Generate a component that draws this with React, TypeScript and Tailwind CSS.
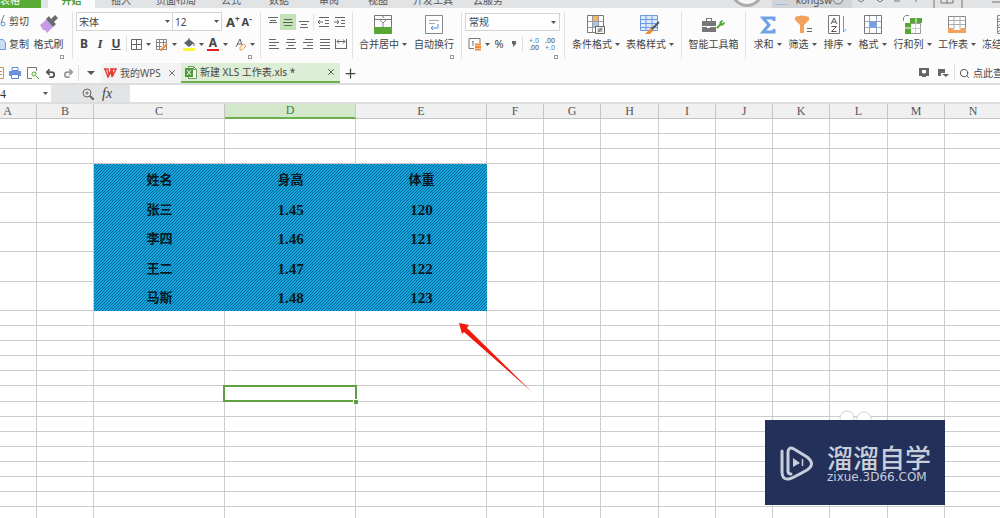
import React from 'react';
import { Plus, Search, Undo2, Redo2, X, Wrench } from 'lucide-react';

const menuTabs = [
  { name: '插入', left: 'ml-[16px] w-[20px]' },
  { name: '页面布局', left: 'ml-[25px] w-[40px]' },
  { name: '公式', left: 'ml-[25px] w-[20px]' },
  { name: '数据', left: 'ml-[28px] w-[20px]' },
  { name: '审阅', left: 'ml-[30px] w-[20px]' },
  { name: '视图', left: 'ml-[29px] w-[20px]' },
  { name: '开发工具', left: 'ml-[25px] w-[40px]' },
  { name: '云服务', left: 'ml-[20px] w-[30px]' },
];

const columns = [
  { name: 'A', width: 37 },
  { name: 'B', width: 57 },
  { name: 'C', width: 131 },
  { name: 'D', width: 131 },
  { name: 'E', width: 131 },
  { name: 'F', width: 57 },
  { name: 'G', width: 57 },
  { name: 'H', width: 58 },
  { name: 'I', width: 57 },
  { name: 'J', width: 57 },
  { name: 'K', width: 57 },
  { name: 'L', width: 58 },
  { name: 'M', width: 57 },
  { name: 'N', width: 57 },
];

const people = [
  ['姓名', '身高', '体重'],
  ['张三', '1.45', '120'],
  ['李四', '1.46', '121'],
  ['王二', '1.47', '122'],
  ['马斯', '1.48', '123'],
];

// first row of the filled block, and the row of the selected cell
const DATA_START = 3;
const SELECTED_ROW = 13;
const rows = Array.from({ length: 22 }, (_, i) => i);

const rowHeight = (row: number) => {
  if (row >= DATA_START && row < DATA_START + people.length) return row % 2 ? 'h-[29px]' : 'h-[30px]';
  return row === SELECTED_ROW ? 'h-[16px]' : 'h-[15px]';
};

const Caret: React.FC = () => (
  <svg width="5" height="3" viewBox="0 0 5 3" className="shrink-0">
    <path d="M0 0h5L2.5 3z" fill="#555" />
  </svg>
);

const Launcher: React.FC = () => (
  <button aria-label="更多设置" className="h-[4px] w-[4px] shrink-0 border border-[#999]" />
);

const Divider: React.FC = () => <div className="h-[47px] w-px shrink-0 bg-[#e2e2e2]" />;

const SmallDivider: React.FC = () => <div className="h-[16px] w-px shrink-0 bg-[#dedede]" />;

const lineSets: Record<string, number[][]> = {
  top: [[1, 10], [4, 6], [6, 8]],
  middle: [[3, 8], [6, 10], [9, 8]],
  bottom: [[5, 10], [8, 6], [11, 8]],
  left: [[1, 7], [4, 10], [7, 7], [10, 10]],
  center: [[1, 8], [4, 10], [7, 6], [10, 10]],
  right: [[1, 8], [4, 10], [7, 6], [10, 10]],
  justify: [[1, 10], [4, 10], [7, 10], [10, 10]],
};

const Lines: React.FC<{ kind: string }> = ({ kind }) => (
  <svg width="12" height="12" viewBox="0 0 12 12">
    {lineSets[kind].map(([y, w]) => {
      const x = kind === 'left' ? 1 : kind === 'right' ? 11 - w : 6 - w / 2;
      return <rect key={y} x={x} y={y} width={w} height="1" fill="#666" />;
    })}
  </svg>
);

const Indent: React.FC<{ flip?: boolean }> = ({ flip }) => (
  <svg width="12" height="12" viewBox="0 0 12 12" fill="none" stroke="#666">
    <path d="M1 1.500h10M7 4.500h4M7 7.500h4M1 10.500h10" />
    <path d={flip ? 'M0 6h5M3 4l2 2-2 2' : 'M5 6H0M2 4L0 6l2 2'} />
  </svg>
);

const BigButton: React.FC<{ label: string; width: string; caret?: boolean; children: React.ReactNode }> = ({
  label,
  width,
  caret,
  children,
}) => (
  <button className={`flex shrink-0 flex-col items-center ${width}`}>
    <span className="flex h-[25px] items-center justify-center">{children}</span>
    <span className="flex h-[14px] items-center gap-[3px] whitespace-nowrap">
      {label}
      {caret && <Caret />}
    </span>
  </button>
);

const SheetIcon: React.FC = () => (
  <svg width="12" height="13" viewBox="0 0 12 13" fill="none" className="shrink-0">
    <path d="M3.500 .5h5l3 3v9h-8z" fill="#fff" stroke="#6b9e58" />
    <path d="M8.500 .5v3h3" stroke="#6b9e58" />
    <rect y="2" width="8" height="9" fill="#4f9a38" />
    <path d="M2 4l4 5M6 4L2 9" stroke="#fff" />
  </svg>
);

const MenuBar: React.FC = () => (
  <nav className="flex h-[8px] shrink-0 items-end overflow-hidden bg-[#e2e3e5] text-[10px] leading-[12px] text-[#555]">
    <button className="flex h-[8px] w-[41px] shrink-0 items-end bg-[#5aaa36] text-white">
      <span className="pb-[2px]">表格</span>
    </button>
    <button className="ml-[7px] flex h-[8px] w-[47px] shrink-0 items-end justify-center bg-[#fcfcfc] font-bold text-[#4a9a35]">
      <span className="pb-[2px]">开始</span>
    </button>
    {menuTabs.map((tab) => (
      <button key={tab.name} className={`flex h-[8px] shrink-0 items-end whitespace-nowrap ${tab.left}`}>
        <span className="pb-[2px]">{tab.name}</span>
      </button>
    ))}
    <svg width="34" height="8" viewBox="0 0 34 8" className="ml-[227px] shrink-0">
      <circle cx="17" cy="-9" r="16" fill="#aaa" />
      <circle cx="17" cy="-9" r="13" fill="#f4f4f4" />
    </svg>
    <div className="ml-[8px] flex h-[8px] w-[80px] shrink-0 items-end justify-between bg-[#d3d4d7]">
      <svg width="16" height="8" viewBox="0 0 16 8">
        <path d="M3 4.500h13" stroke="#9fc0dc" />
      </svg>
      <span className="flex items-end pr-[8px]">
        <span className="pb-[2px]">kongsw</span>
        <svg width="12" height="8" viewBox="0 0 12 8" fill="none" stroke="#777">
          <circle cx="6" cy="-1" r="5" />
        </svg>
      </span>
    </div>
    <svg width="148" height="8" viewBox="0 0 148 8" className="shrink-0" fill="none" stroke="#777">
      <path d="M6 0l3 2 3-2M25 0l3 2 3-2M42 1h6M64 0v2M82 0v8M89 0v3h12V0M95 0v3M110 0v8M140 2h8" />
    </svg>
  </nav>
);

const ClipboardGroup: React.FC = () => (
  <>
    <div className="flex w-[29px] shrink-0 flex-col gap-[9px] pt-[2px]">
      <button className="flex items-center gap-[3px] whitespace-nowrap">
        <svg width="6" height="12" viewBox="0 0 6 12" fill="none" className="shrink-0">
          <path d="M4 0L1 8" stroke="#777" />
          <circle cx="3" cy="9" r="2" stroke="#5b94dc" />
        </svg>
        剪切
      </button>
      <button className="flex items-center gap-[3px] whitespace-nowrap">
        <svg width="6" height="12" viewBox="0 0 6 12" className="shrink-0">
          <path d="M-1 1.500h4l2.500 3v7H-1z" fill="#c9ddf5" stroke="#6a9ce0" />
        </svg>
        复制
      </button>
    </div>
    <div className="flex w-[43px] shrink-0 flex-col">
      <BigButton label="格式刷" width="w-[39px]">
        <svg width="20" height="20" viewBox="0 0 20 20">
          <path d="M1 10L8 4l6 8-6 6-2-3-2 0z" fill="#c69be8" />
          <path d="M7 4l3-3 2 3 4-4 3 3-4 4 2 2-3 3z" fill="#6b6b6b" />
        </svg>
      </BigButton>
      <div className="mt-[4px] flex justify-end pr-[8px]"><Launcher /></div>
    </div>
    <Divider />
  </>
);

const FontGroup: React.FC = () => (
  <>
    <div className="flex w-[187px] shrink-0 flex-col px-[3px]">
      <div className="flex h-[19px] items-center">
        <div className="flex h-[19px] w-[97px] items-center border border-[#d4d4d4] bg-white px-[2px]">
          <select aria-label="字体" className="min-w-0 flex-1 appearance-none"><option>宋体</option></select>
          <Caret />
        </div>
        <div className="flex h-[19px] w-[49px] items-center border border-l-0 border-[#d4d4d4] bg-white px-[2px]">
          <select aria-label="字号" className="min-w-0 flex-1 appearance-none"><option>12</option></select>
          <Caret />
        </div>
        <button className="ml-[4px] flex text-[13px] font-bold">
          A<span className="text-[8px] leading-[8px]">+</span>
        </button>
        <button className="ml-[2px] flex text-[11px] font-bold">
          A<span className="text-[8px] leading-[8px]">-</span>
        </button>
      </div>
      <div className="mt-[6px] flex h-[14px] items-center">
        <button className="w-[16px] text-[12px] font-bold">B</button>
        <button className="w-[16px] font-['Liberation_Serif',serif] text-[13px] font-bold italic">I</button>
        <button className="w-[16px] text-[12px] font-bold underline">U</button>
        <span className="ml-[2px] mr-[4px]"><SmallDivider /></span>
        <button aria-label="边框" className="flex w-[24px] items-center gap-[4px]">
          <svg width="11" height="11" viewBox="0 0 11 11" fill="none" stroke="#666">
            <path d="M.5 .5h10v10h-10zM5.500 .5v10M.5 5.500h10" />
          </svg>
          <Caret />
        </button>
        <button aria-label="绘制边框" className="flex w-[28px] items-center gap-[4px]">
          <svg width="13" height="13" viewBox="0 0 13 13" fill="none" stroke="#888">
            <path d="M1.500 1.500h10v10h-10zM4.500 1.500v10M8.500 1.500v6M1.500 4.500h10M1.500 8.500h5" />
            <path d="M12 6L7 11l-1 2" stroke="#ef8a3c" strokeWidth="2" />
          </svg>
          <Caret />
        </button>
        <button aria-label="填充颜色" className="flex w-[24px] items-center gap-[3px]">
          <svg width="13" height="14" viewBox="0 0 13 14">
            <path d="M1 6l5-4 5 4-5 4z" fill="#5b6570" />
            <path d="M6 1v4M11 6v3" stroke="#5b6570" />
            <rect y="11" width="12" height="3" fill="#f6f63a" />
          </svg>
          <Caret />
        </button>
        <button aria-label="字体颜色" className="flex w-[28px] items-center gap-[4px]">
          <span className="flex w-[12px] shrink-0 flex-col items-center border-b-2 border-[#e02020] text-[12px] font-bold leading-[12px]">A</span>
          <Caret />
        </button>
        <button aria-label="清除" className="flex items-center gap-[3px]">
          <svg width="12" height="13" viewBox="0 0 12 13" fill="none">
            <path d="M1 9L5 1l2 6M2 6h4" stroke="#666" />
            <path d="M5 9l4-3 2 2-4 4H5z" stroke="#ef9a4c" />
          </svg>
          <Caret />
        </button>
      </div>
      <div className="mt-[4px] flex justify-end pr-[5px]"><Launcher /></div>
    </div>
    <Divider />
  </>
);

const AlignGroup: React.FC = () => (
  <>
    <div className="flex w-[91px] shrink-0 flex-col gap-[6px] pl-[4px] pt-[2px]">
      <div className="flex h-[16px] items-center">
        <button aria-label="顶端对齐" className="flex w-[15px] justify-center"><Lines kind="top" /></button>
        <button aria-label="垂直居中" className="flex h-[16px] w-[16px] items-center justify-center bg-[#c3e3b5]"><Lines kind="middle" /></button>
        <button aria-label="底端对齐" className="flex w-[16px] justify-center"><Lines kind="bottom" /></button>
        <span className="ml-[1px] mr-[2px]"><SmallDivider /></span>
        <button aria-label="减少缩进" className="flex w-[16px] justify-center"><Indent /></button>
        <button aria-label="增加缩进" className="flex w-[16px] justify-center"><Indent flip /></button>
      </div>
      <div className="flex h-[16px] items-center">
        {['left', 'center', 'right', 'justify'].map((kind) => (
          <button key={kind} aria-label={kind} className="flex w-[17px] justify-center"><Lines kind={kind} /></button>
        ))}
        <button aria-label="分散对齐" className="flex w-[16px] justify-center">
          <svg width="12" height="12" viewBox="0 0 12 12" fill="none" stroke="#666">
            <path d="M.5 1v10M11.500 1v10M2 3.500h8M4 1.500l-2 2 2 2M8 1.500l2 2-2 2M1 10.500h10" />
          </svg>
        </button>
      </div>
    </div>
    <Divider />
    <div className="flex w-[108px] shrink-0 flex-col">
      <div className="flex">
        <BigButton label="合并居中" width="w-[60px]" caret>
          <svg width="18" height="19" viewBox="0 0 18 19" fill="none">
            <path d="M.5 .5h17v18H.5zM9 0v3M.5 4.500h17" stroke="#777" />
            <path d="M6 5l3 3 3-3M9 8v4" stroke="#7a8aa0" />
            <rect x="0" y="12" width="18" height="7" fill="#58a636" />
          </svg>
        </BigButton>
        <BigButton label="自动换行" width="w-[42px]">
          <svg width="18" height="19" viewBox="0 0 18 19" fill="none">
            <path d="M.5 .5h17v18H.5z" fill="#fff" stroke="#888" />
            <path d="M4 5.500h10M4 8.500h6" stroke="#aaa" />
            <path d="M13 9v4H6M8 11l-2 2 2 2" stroke="#4f8fd8" />
          </svg>
        </BigButton>
      </div>
      <div className="mt-[4px] flex justify-end pr-[7px]"><Launcher /></div>
    </div>
    <Divider />
  </>
);

const NumberGroup: React.FC = () => (
  <>
    <div className="flex w-[102px] shrink-0 flex-col px-[3px]">
      <div className="mt-px flex h-[18px] w-[95px] items-center border border-[#d4d4d4] bg-white px-[3px]">
        <select aria-label="数字格式" className="min-w-0 flex-1 appearance-none"><option>常规</option></select>
        <Caret />
      </div>
      <div className="mt-[6px] flex h-[14px] items-center pl-[3px]">
        <button aria-label="货币" className="flex w-[24px] items-center gap-[3px]">
          <svg width="14" height="13" viewBox="0 0 14 13" fill="none">
            <path d="M9 .5h3v5M6 10.500H1V.5h9M5 3v5M4 4l1-1" stroke="#777" />
            <path d="M7 6.500h6M7 9h6M7 11.500h6" stroke="#f08c35" strokeWidth="2" />
          </svg>
          <Caret />
        </button>
        <button className="w-[14px] text-[11px]">%</button>
        <button aria-label="千位分隔" className="flex w-[16px] justify-center">
          <svg width="4" height="6" viewBox="0 0 4 6"><path d="M0 0h4v3L1 6V3H0z" fill="#666" /></svg>
        </button>
        <span className="mr-[3px]"><SmallDivider /></span>
        <button className="flex w-[16px] flex-col text-[7px] leading-[7px]"><span className="text-[#3f85cc]">+.0</span><span>.00</span></button>
        <button className="flex w-[16px] flex-col text-[7px] leading-[7px]"><span>.00</span><span className="text-[#3f85cc]">+.0</span></button>
      </div>
      <div className="mt-[4px] flex justify-end pr-[3px]"><Launcher /></div>
    </div>
    <Divider />
  </>
);

const StyleGroup: React.FC = () => (
  <>
    <div className="flex w-[116px] shrink-0 pl-[4px]">
      <BigButton label="条件格式" width="w-[54px]" caret>
        <svg width="19" height="20" viewBox="0 0 19 20" fill="none">
          <path d="M.5 .5h16v17H.5z" fill="#fff" stroke="#777" />
          <path d="M5 1h6v5H5z" fill="#f5b568" />
          <path d="M5 7h6v5H5z" fill="#a7c4ee" />
          <path d="M5.500 .5v17M11.500 .5v17M.5 6.500h16M.5 12.500h16" stroke="#999" />
          <path d="M8.500 11.500h9v7h-9z" fill="#fff" stroke="#666" />
          <path d="M10.500 14h5M10.500 16h5M15 12.500l-4 5" stroke="#666" />
        </svg>
      </BigButton>
      <BigButton label="表格样式" width="w-[54px]" caret>
        <svg width="20" height="20" viewBox="0 0 20 20" fill="none">
          <path d="M.5 .5h17v15H.5z" fill="#dce9fa" stroke="#6f9bdc" />
          <path d="M6 .5v15M12 .5v15M.5 4.500h17M.5 8.500h17M.5 12.500h17" stroke="#6f9bdc" />
          <path d="M19 7l-8 8" stroke="#555" strokeWidth="2" />
          <path d="M11 13l2 3-3 3H5z" fill="#ee8b33" />
        </svg>
      </BigButton>
    </div>
    <Divider />
    <div className="flex w-[63px] shrink-0 justify-center">
      <BigButton label="智能工具箱" width="w-[50px]">
        <svg width="14" height="14" viewBox="0 0 14 14">
          <path d="M0 3h14v5H0zM0 9h14v5H0zM4 0h6v3H9V1H5v2H4z" fill="#777" />
          <path d="M5 8h3v2H5z" fill="#fff" />
        </svg>
        <Wrench size={9} className="fill-[#58a636] text-[#58a636]" />
      </BigButton>
    </div>
    <Divider />
  </>
);

const DataGroup: React.FC = () => (
  <div className="flex shrink-0 pl-[4px]">
    <BigButton label="求和" width="w-[35px]" caret>
      <svg width="16" height="18" viewBox="0 0 16 18" fill="none" stroke="#6ea1e6" strokeWidth="3">
        <path d="M14 5V2H3l6 7-6 7h11v-3" />
      </svg>
    </BigButton>
    <BigButton label="筛选" width="w-[35px]" caret>
      <svg width="18" height="19" viewBox="0 0 18 19">
        <path d="M1 2q7-3 14 0v3l-5 5v8H6v-8L1 5z" fill="#f2a25c" />
        <path d="M13 13.500h5M13 16.500h5" stroke="#666" />
      </svg>
    </BigButton>
    <BigButton label="排序" width="w-[35px]" caret>
      <svg width="19" height="19" viewBox="0 0 19 19" fill="none">
        <path d="M.5 .5h11v18H.5z" fill="#fff" stroke="#777" />
        <path d="M3 9l3-6 3 6M4 7h4M3.500 11.500h5l-5 5h5" stroke="#555" />
        <path d="M15.500 1v16l3-3" stroke="#5b98e6" />
      </svg>
    </BigButton>
    <BigButton label="格式" width="w-[35px]" caret>
      <svg width="18" height="19" viewBox="0 0 18 19" fill="none">
        <path d="M.5 .5h17v18H.5z" fill="#fff" stroke="#777" />
        <path d="M6 7h6v6H6z" fill="#6ea1e6" />
        <path d="M5.500 1v17M12.500 1v17M.5 6.500h17M.5 12.500h17" stroke="#8fa6c8" />
      </svg>
    </BigButton>
    <BigButton label="行和列" width="w-[45px]" caret>
      <svg width="19" height="19" viewBox="0 0 19 19" fill="none">
        <path d="M7.500 8.500h10v10h-10z" stroke="#999" />
        <path d="M12.500 8v10M8 13.500h10" stroke="#ccc" />
        <path d="M7 3h12v5H8v11H2V8h5z" fill="#58a636" />
        <path d="M13 3v5M2 13h6" stroke="#fff" />
        <path d="M.5 6V2.500L2.500 .5H6" stroke="#888" />
      </svg>
    </BigButton>
    <BigButton label="工作表" width="w-[44px]" caret>
      <svg width="18" height="19" viewBox="0 0 18 19" fill="none">
        <path d="M.5 1.500h17v15H.5z" fill="#fff" stroke="#888" />
        <path d="M6 1v13M12 1v13M1 5.500h16M1 9.500h16" stroke="#aaa" />
        <path d="M0 13h5l1 2h6l1-2h5v5H0z" fill="#f2a25c" />
      </svg>
    </BigButton>
    <BigButton label="冻结窗格" width="w-[54px]" caret>
      <svg width="18" height="19" viewBox="0 0 18 19" fill="none" stroke="#888">
        <path d="M.5 .5h17v18H.5zM6.500 1v17M1 6.500h16M1 12.500h16M1 5l5-4M1 11l5-4M1 17l5-4" />
      </svg>
    </BigButton>
  </div>
);

const Ribbon: React.FC = () => (
  <div className="flex h-[55px] shrink-0 overflow-hidden pt-[4px] text-[10px] leading-[14px] text-[#444]">
    <ClipboardGroup />
    <FontGroup />
    <AlignGroup />
    <NumberGroup />
    <StyleGroup />
    <DataGroup />
  </div>
);

const DocumentTabs: React.FC = () => (
  <div className="flex h-[20px] shrink-0 items-center text-[10px] leading-[14px] text-[#444]">
    <div className="flex w-[78px] shrink-0 items-center">
      <button aria-label="保存">
        <svg width="6" height="12" viewBox="0 0 6 12" fill="none" stroke="#d28a5c">
          <path d="M0 .5h3.500v11H0M0 4.500h2M0 7.500h2" />
        </svg>
      </button>
      <button aria-label="打印" className="ml-[3px]">
        <svg width="12" height="12" viewBox="0 0 12 12">
          <path d="M3 .5h6v3H3z" fill="#fff" stroke="#5c86d6" />
          <path d="M0 4h12v5H0z" fill="#6d94dc" />
          <path d="M2.500 7.500h7v4h-7z" fill="#fff" stroke="#5c86d6" />
        </svg>
      </button>
      <button aria-label="打印预览" className="ml-[6px]">
        <svg width="12" height="12" viewBox="0 0 12 12" fill="none">
          <path d="M5 11.500H.5V.5h9V4" stroke="#777" />
          <circle cx="7" cy="7" r="2" stroke="#58a636" />
          <path d="M9 9l3 3" stroke="#58a636" />
        </svg>
      </button>
      <button aria-label="撤销" className="ml-[6px]"><Undo2 size={11} strokeWidth={4} className="text-[#555]" /></button>
      <button aria-label="恢复" className="ml-[7px]"><Redo2 size={11} strokeWidth={4} className="text-[#999]" /></button>
    </div>
    <SmallDivider />
    <button aria-label="自定义" className="flex w-[22px] shrink-0 justify-end pr-[6px]">
      <svg width="8" height="4" viewBox="0 0 8 4"><path d="M0 0h8L4 4z" fill="#555" /></svg>
    </button>
    <div className="flex h-[20px] w-[80px] shrink-0 items-center bg-[#f3f3f3] pl-[3px] text-[#555]">
      <svg width="13" height="10" viewBox="0 0 13 10" fill="none" stroke="#e0403a" strokeWidth="1.5">
        <path d="M0 1h4l1 6 3-6 1 6 3-6H6M1 1l3 8 3-6 1 6" />
      </svg>
      <a href="#wps" className="ml-[3px] whitespace-nowrap">我的WPS</a>
      <button aria-label="关闭我的WPS" className="ml-auto mr-[4px]"><X size={10} /></button>
    </div>
    <div className="flex h-[20px] w-[159px] shrink-0 items-center border-b-2 border-[#6db04c] bg-[#ddeed6] pl-[4px]">
      <SheetIcon />
      <a href="#sheet" className="ml-[3px] whitespace-nowrap">新建 XLS 工作表.xls *</a>
      <button aria-label="关闭工作表" className="ml-auto mr-[4px]"><X size={10} /></button>
    </div>
    <button aria-label="新建" className="ml-[3px]"><Plus size={15} /></button>
    <div className="ml-auto flex w-[81px] shrink-0 items-center">
      <button aria-label="演示">
        <svg width="11" height="10" viewBox="0 0 11 10">
          <path d="M0 0h10v8H7v1H3V8H0zM3 2v3h1l1 1 1-1h1V2z" fill="#666" fillRule="evenodd" />
        </svg>
      </button>
      <button aria-label="视图" className="ml-[8px]">
        <svg width="11" height="9" viewBox="0 0 11 9">
          <path d="M0 0h7v4H3v3H0zM4 5h7L8 8z" fill="#666" />
        </svg>
      </button>
      <span className="ml-[5px]"><SmallDivider /></span>
      <button className="ml-[4px] flex w-[41px] items-center gap-[3px] overflow-hidden whitespace-nowrap">
        <Search size={11} className="shrink-0" />
        点此查找
      </button>
    </div>
  </div>
);

const FormulaBar: React.FC = () => (
  <div className="flex h-[21px] shrink-0 items-center border-b-2 border-t-2 border-[#dcdddf] bg-[#e3e4e6] text-[10px] text-[#333]">
    <div className="flex h-[17px] w-[51px] shrink-0 items-center bg-white pr-[3px]">
      <input aria-label="名称框" defaultValue="4" className="w-0 min-w-0 flex-1 font-['Liberation_Serif',serif] text-[12px] leading-[14px] outline-none" />
      <Caret />
    </div>
    <div className="flex w-[79px] shrink-0 items-center pl-[31px]">
      <svg width="12" height="12" viewBox="0 0 12 12" fill="none" stroke="#666">
        <circle cx="5" cy="5" r="4" />
        <circle cx="5" cy="5" r="1" />
        <path d="M8 8l4 4" strokeWidth="2" />
      </svg>
      <button className="ml-[8px] font-['Liberation_Serif',serif] text-[14px] italic leading-[14px] text-[#444]">fx</button>
    </div>
    <input aria-label="编辑栏" className="h-[17px] min-w-0 flex-1 bg-white outline-none" />
  </div>
);

const hatch =
  'bg-[linear-gradient(135deg,#12a6de_25%,#0a6594_25%,#0a6594_50%,#12a6de_50%,#12a6de_75%,#0a6594_75%)] bg-[length:3px_3px] bg-fixed';

const Cell: React.FC<{ row: number; col: number }> = ({ row, col }) => {
  const person = people[row - DATA_START];
  if (person && col >= 2 && col <= 4) {
    return (
      <td className={`p-0 pt-[3px] text-center align-middle font-['Liberation_Serif','Noto_Sans_CJK_SC',serif] font-bold leading-[16px] text-[#061822] ${hatch} ${row > DATA_START && col > 2 ? 'text-[15px]' : 'text-[13px]'}`}>
        {person[col - 2]}
      </td>
    );
  }
  if (row === SELECTED_ROW && col === 3) {
    return (
      <td className="relative border-b border-r border-[#cccccc] p-0">
        <div className="absolute -inset-x-[2px] -inset-y-[1px] border-2 border-[#5f9f3f]" />
        <div className="absolute -bottom-[3px] -right-[3px] h-[5px] w-[5px] border-l border-t border-white bg-[#5f9f3f]" />
      </td>
    );
  }
  return <td className="border-b border-r border-[#cccccc] p-0" />;
};

const Sheet: React.FC = () => (
  <main className="relative min-h-0 flex-1 overflow-hidden bg-white">
    <table className="w-max table-fixed border-separate border-spacing-0">
      <colgroup>
        {columns.map((column) => (
          <col key={column.name} style={{ width: column.width }} />
        ))}
      </colgroup>
      <thead>
        <tr className="h-[15px]">
          {columns.map((column) => (
            <th
              key={column.name}
              className={
                column.name === 'D'
                  ? "h-[15px] border-b-2 border-r border-b-[#6db04c] border-r-[#cccccc] bg-[#d3e8ca] p-0 font-['Liberation_Serif',serif] text-[12px] font-normal leading-[13px] text-[#4b7f3c]"
                  : `h-[15px] border-b border-r border-[#c4c4c4] bg-[#f0f0f0] p-0 font-['Liberation_Serif',serif] text-[12px] font-normal leading-[13px] text-[#555] ${column.name === 'A' ? 'pr-[21px]' : ''}`
              }
            >
              {column.name}
            </th>
          ))}
        </tr>
      </thead>
      <tbody>
        {rows.map((row) => (
          <tr key={row} className={rowHeight(row)}>
            {columns.map((column, col) => (
              <Cell key={column.name} row={row} col={col} />
            ))}
          </tr>
        ))}
      </tbody>
    </table>

    {/* Pointer arrow */}
    <svg width="74" height="70" viewBox="0 0 74 70" className="absolute left-[459px] top-[219px]">
      <path d="M0 0l10 2-2 3 65 64L5 9l-2 2z" fill="#f01a0c" />
    </svg>

    <Watermark />
  </main>
);

const Watermark: React.FC = () => (
  <aside className="absolute bottom-[13px] right-[55px] flex flex-col">
    <svg width="34" height="10" viewBox="0 0 34 10" fill="none" stroke="#d2d2d2" className="ml-[74px]">
      <circle cx="8" cy="8" r="7" fill="#fff" />
      <circle cx="25" cy="9" r="7" fill="#fff" />
    </svg>
    <div className="flex h-[85px] w-[180px] items-center bg-[#22305a] pl-[15px] text-[#c9cedb]">
      <svg width="34" height="36" viewBox="0 0 34 36" fill="none" stroke="#c9cedb" strokeWidth="3" strokeLinecap="round" className="shrink-0">
        <path d="M2 6v21q0 8 7 7 4-1 18-9 9-6 0-13L14 4Q8 1 8 8v18q0 3 3 3" />
        <path d="M13 13l7 5-7 4z" fill="#c9cedb" stroke="none" />
        <path d="M22.500 14v7" strokeWidth="1.500" strokeLinecap="butt" />
      </svg>
      <div className="ml-[13px] flex flex-col whitespace-nowrap">
        <span className="font-['Noto_Sans_CJK_SC',sans-serif] text-[26px] font-medium leading-[28px]">溜溜自学</span>
        <span className="font-['DejaVu_Sans',sans-serif] text-[12px] leading-[12px]">zixue.3D66.COM</span>
      </div>
    </div>
  </aside>
);

const App: React.FC = () => (
  <div className="flex h-screen flex-col overflow-hidden bg-[#fcfcfc] font-['Noto_Sans','Noto_Sans_CJK_SC',sans-serif]">
    <MenuBar />
    <Ribbon />
    <DocumentTabs />
    <FormulaBar />
    <Sheet />
  </div>
);

export default App;
